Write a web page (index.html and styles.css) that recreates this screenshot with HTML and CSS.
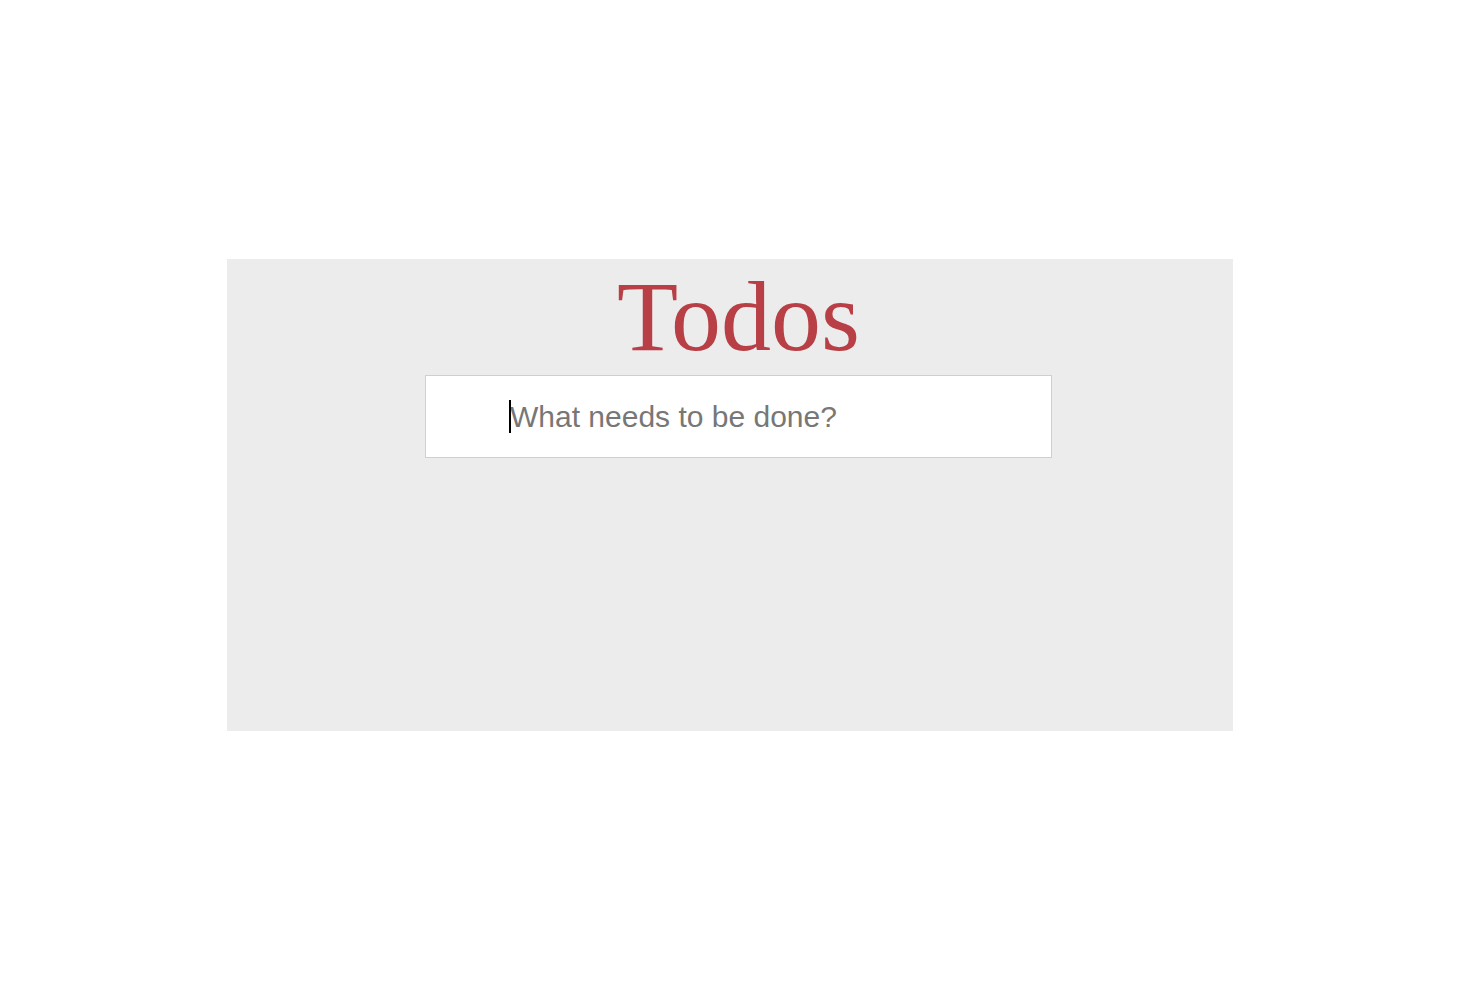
FILE: index.html
```html
<!DOCTYPE html>
<html lang="en">
<head>
<meta charset="utf-8">
<title>Todos</title>
<link rel="stylesheet" href="styles.css">
</head>
<body>
<main class="page">
  <section class="todoapp">
    <div class="column">
      <h1 class="title">Todos</h1>
      <div class="field">
        <input class="new-todo" type="text" placeholder="What needs to be done?" autofocus>
        <span class="caret" aria-hidden="true"></span>
      </div>
    </div>
  </section>
</main>
</body>
</html>
```
FILE: styles.css
```css
html, body {
  margin: 0;
  padding: 0;
  background: #ffffff;
}

.page {
  padding-top: 259px;
  display: flex;
  justify-content: center;
}

.todoapp {
  width: 1006px;
  height: 472px;
  background: #ececec;
  box-sizing: border-box;
  padding: 8px 0 0 198px;
}

.column {
  width: 627px;
  display: flex;
  flex-direction: column;
  gap: 8px;
}

.title {
  margin: 0;
  font-family: "Liberation Serif", "Times New Roman", serif;
  font-weight: normal;
  font-size: 100px;
  line-height: 100px;
  color: #b83f45;
  text-align: center;
}

.field {
  position: relative;
  width: 627px;
  height: 83px;
}

.new-todo {
  display: block;
  box-sizing: border-box;
  width: 627px;
  height: 83px;
  margin: 0;
  border: 1px solid #cfcfcf;
  background: #ffffff;
  padding: 0 16px 0 84px;
  font-family: "Liberation Sans", Arial, sans-serif;
  font-size: 30px;
  color: #333;
  outline: none;
  caret-color: transparent;
}

.new-todo::placeholder {
  color: #777777;
}

.caret {
  position: absolute;
  left: 84px;
  top: 25px;
  width: 2px;
  height: 33px;
  background: #000000;
  pointer-events: none;
}
```
